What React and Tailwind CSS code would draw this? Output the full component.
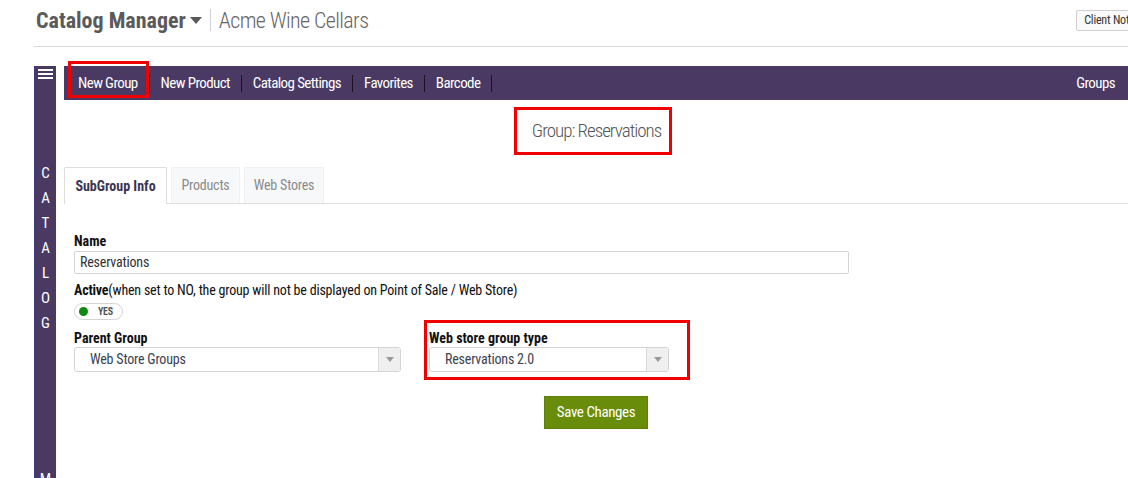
const navItems = ['New Group', 'New Product', 'Catalog Settings', 'Favorites', 'Barcode'];
const letters = ['C', 'A', 'T', 'A', 'L', 'O', 'G'];

function SelectBox({ value, width }) {
  return (
    <div className={`flex h-[25px] ${width} items-stretch rounded-[3px] border border-[#d4d4d4] bg-white`}>
      <div className="flex flex-1 items-center pl-[15px] text-[14px] tracking-[-0.2px] text-[#3c4250]">{value}</div>
      <div className="flex w-[22px] items-center justify-center border-l border-[#dcdcdc] bg-[#efefef]">
        <div className="h-0 w-0 border-x-[4px] border-t-[5px] border-x-transparent border-t-[#9a9a9a]" />
      </div>
    </div>
  );
}

export default function App() {
  return (
    <div className="relative h-[478px] w-[1128px] overflow-hidden bg-white font-['Roboto_Condensed',sans-serif]">
      {/* header */}
      <div className="ml-[34px] flex h-[47px] items-start border-b border-[#d6dade]">
        <div className="flex h-[40px] items-center">
          <span className="pl-[2px] text-[22px] font-bold text-[#5a5a5a]">Catalog Manager</span>
          <span className="ml-[4px] mt-[1px] h-0 w-0 border-x-[6px] border-t-[7px] border-x-transparent border-t-[#5a5a5a]" />
          <span className="ml-[8px] h-[22px] w-px bg-[#d0d4d8]" />
          <span className="ml-[8px] text-[22px] font-light tracking-[-0.6px] text-[#666666]">Acme Wine Cellars</span>
        </div>
        <button className="-mr-[20px] ml-auto mt-[10px] h-[21px] shrink-0 rounded-[2px] border border-[#cfcfcf] bg-[#fafafa] px-[7px] text-[12px] leading-[19px] tracking-[-0.2px] text-[#333]">
          Client Notes
        </button>
      </div>

      <div className="mt-[19px] flex h-[420px]">
        {/* sidebar */}
        <div className="ml-[34px] flex w-[22px] shrink-0 flex-col items-center border-l border-[#3d3a7a] bg-[#4a3a63] text-white">
          <div className="mt-[3px] flex w-[15px] flex-col gap-[2px]">
            <div className="h-[2px] bg-white" />
            <div className="h-[2px] bg-white" />
            <div className="h-[2px] bg-white" />
          </div>
          <div className="mt-[82px] flex flex-col items-center">
            {letters.map((l, i) => (
              <div key={i} className="h-[25px] text-[15px] leading-[25px]">{l}</div>
            ))}
          </div>
          <div className="mt-[131px] text-[15px] leading-[25px]">M</div>
        </div>

        {/* main */}
        <div className="ml-[8px] flex flex-1 flex-col">
          <div className="relative flex h-[34px] items-center bg-[#4a3a63] pl-[14px] pr-[13px] text-[15px] tracking-[-0.6px] text-white">
            {navItems.map((n, i) => (
              <div key={n} className="flex items-center">
                <span>{n}</span>
                <span className="mx-[11px] h-[17px] w-px bg-[#1e1222]" />
              </div>
            ))}
            <span className="ml-auto">Groups</span>
            <div className="absolute left-[4px] top-[-5px] h-[37px] w-[81px] border-[3px] border-[#f00000]" />
          </div>

          <div className="mt-[7px] flex justify-center">
            <div className="ml-[-6px] border-[3px] border-[#f00000] py-[8px] pl-[15px] pr-[8px] text-[19px] font-light leading-[26px] tracking-[-1px] text-[#555]">
              Group: Reservations
            </div>
          </div>

          {/* tabs */}
          <div className="mt-[12px] flex h-[37px] items-end border-b border-[#dddddd]">
            <div className="-mb-px flex h-[37px] w-[103px] items-center justify-center rounded-t-[2px] border border-b-0 border-[#dddddd] bg-white text-[14px] font-bold text-[#3c3553]">
              SubGroup Info
            </div>
            <div className="ml-[4px] flex h-[36px] w-[69px] items-center justify-center border border-b-0 border-[#eef0f2] bg-[#f6f8fa] text-[14px] tracking-[-0.2px] text-[#8a8a8a]">
              Products
            </div>
            <div className="ml-[4px] flex h-[36px] w-[80px] items-center justify-center border border-b-0 border-[#eef0f2] bg-[#f6f8fa] text-[14px] tracking-[-0.2px] text-[#8a8a8a]">
              Web Stores
            </div>
          </div>

          {/* form */}
          <div className="flex flex-col pl-[10px]">
            <div className="mt-[29px] text-[14px] font-bold leading-[17px] text-[#111]">Name</div>
            <div className="mt-[1px] flex h-[23px] w-[775px] items-center rounded-[2px] border border-[#d4d4d4] pl-[5px] text-[14px] tracking-[-0.2px] text-[#333]">
              Reservations
            </div>
            <div className="mt-[8px] text-[14px] leading-[17px] tracking-[-0.2px] text-[#111]">
              <span className="font-bold">Active</span>(when set to NO, the group will not be displayed on Point of Sale / Web Store)
            </div>
            <div className="mt-[4px] flex h-[17px] w-[49px] items-center rounded-full border border-[#d4d4d4] bg-white pl-[4px]">
              <span className="h-[9px] w-[9px] rounded-full bg-[#0c8a12]" />
              <span className="ml-[10px] text-[10px] font-bold tracking-[-0.3px] text-[#555]">YES</span>
            </div>

            <div className="flex items-start">
              <div className="flex flex-col pt-[10px]">
                <div className="text-[14px] font-bold leading-[17px] text-[#111]">Parent Group</div>
                <SelectBox value="Web Store Groups" width="w-[327px]" />
              </div>
              <div className="ml-[23px] flex flex-col border-[3px] border-[#f00000] pb-[5px] pl-[2px] pr-[18px] pt-[7px]">
                <div className="text-[14px] font-bold leading-[17px] text-[#111]">Web store group type</div>
                <SelectBox value="Reservations 2.0" width="w-[240px]" />
              </div>
            </div>
          </div>

          <div className="mt-[16px] flex justify-center">
            <button className="h-[33px] w-[104px] border border-[#5f7e0a] bg-[#6a8c0b] text-[15px] tracking-[-0.4px] text-white">
              Save Changes
            </button>
          </div>
        </div>
      </div>
    </div>
  );
}
